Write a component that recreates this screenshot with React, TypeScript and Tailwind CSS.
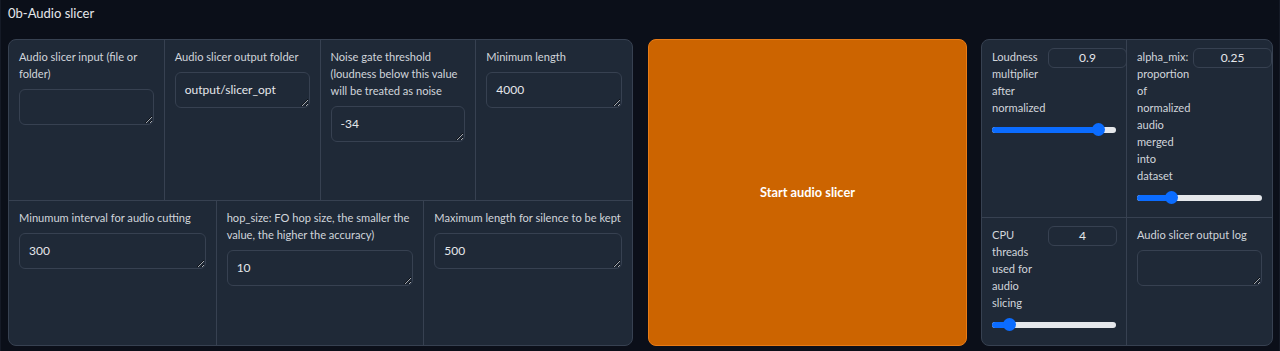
import React from "react";

const Field: React.FC<{ label: string; value?: string }> = ({ label, value = "" }) => {
  return (
    <div className="flex flex-col gap-[7px] px-[10px] pt-[8px]">
      <span className="leading-[17px] text-[#d1d5db]">{label}</span>
      <textarea
        readOnly
        rows={1}
        value={value}
        className="w-full h-[36px] resize-y rounded-[6px] border border-[#374151] bg-[#1f2937] px-[9px] py-[8px] text-[12px] leading-[17px] text-[#e5e7eb] outline-none"
      />
    </div>
  );
};

const Slider: React.FC<{ pct: number }> = ({ pct }) => {
  return (
    <div className="relative mt-[7px] h-[13px] flex items-center">
      <div className="w-full h-[6px] rounded-full bg-[#e5e7eb]" />
      <div
        className="absolute left-0 h-[6px] rounded-full bg-[#0b6cff]"
        style={{ width: `calc(6.5px + (100% - 13px) * ${pct / 100})` }}
      />
      <div
        className="absolute top-0 w-[13px] h-[13px] rounded-full bg-[#0b6cff]"
        style={{ left: `calc((100% - 13px) * ${pct / 100})` }}
      />
    </div>
  );
};

const SliderField: React.FC<{
  label: string;
  value: string;
  pct: number;
  boxClass: string;
}> = ({ label, value, pct, boxClass }) => {
  return (
    <div className="flex flex-col px-[10px] pt-[8px]">
      <div className="flex items-start">
        <span className="w-[56px] shrink-0 leading-[17px] text-[#d1d5db]">{label}</span>
        <div
          className={`h-[20px] rounded-[6px] border border-[#374151] text-center text-[12px] leading-[18px] text-[#e5e7eb] ${boxClass}`}
        >
          {value}
        </div>
      </div>
      <Slider pct={pct} />
    </div>
  );
};

export default function App() {
  return (
    <div className="w-full h-[351px] bg-[#0b0f19] border-x border-[#151a26] font-['Source_Sans_Pro','Lato',sans-serif] text-[11.1px]">
      <div className="h-[28px] px-[7px] flex items-center text-[13px] text-[#e5e7eb]">0b-Audio slicer</div>

      <div className="flex pl-[7px] pt-[11px]">
        {/* settings grid */}
        <div className="w-[625px] h-[307px] flex flex-col rounded-lg border border-[#374151] bg-[#1f2937] overflow-hidden">
          <div className="h-[161px] grid grid-cols-4 divide-x divide-[#374151] border-b border-[#374151]">
            <Field label="Audio slicer input (file or folder)" />
            <Field label="Audio slicer output folder" value="output/slicer_opt" />
            <Field label="Noise gate threshold (loudness below this value will be treated as noise" value="-34" />
            <Field label="Minimum length" value="4000" />
          </div>
          <div className="flex-1 grid grid-cols-3 divide-x divide-[#374151]">
            <Field label="Minumum interval for audio cutting" value="300" />
            <Field label="hop_size: FO hop size, the smaller the value, the higher the accuracy)" value="10" />
            <Field label="Maximum length for silence to be kept" value="500" />
          </div>
        </div>

        <button className="ml-[15px] w-[319px] h-[307px] rounded-lg border border-[#e87b16] bg-[#cc6400] text-[12.8px] font-bold text-white">
          Start audio slicer
        </button>

        {/* sliders */}
        <div className="ml-[14px] w-[292px] h-[307px] flex flex-col rounded-lg border border-[#374151] bg-[#1f2937] overflow-hidden">
          <div className="h-[178px] grid grid-cols-2 divide-x divide-[#374151] border-b border-[#374151]">
            <SliderField
              label="Loudness multiplier after normalized"
              value="0.9"
              pct={90}
              boxClass="w-[79px] shrink-0 mr-[-9px]"
            />
            <SliderField
              label="alpha_mix: proportion of normalized audio merged into dataset"
              value="0.25"
              pct={25}
              boxClass="w-[79px] shrink-0 mr-[-9px]"
            />
          </div>
          <div className="flex-1 grid grid-cols-2 divide-x divide-[#374151]">
            <SliderField
              label="CPU threads used for audio slicing"
              value="4"
              pct={9.5}
              boxClass="w-[69px] shrink-0"
            />
            <Field label="Audio slicer output log" />
          </div>
        </div>
      </div>
    </div>
  );
}
